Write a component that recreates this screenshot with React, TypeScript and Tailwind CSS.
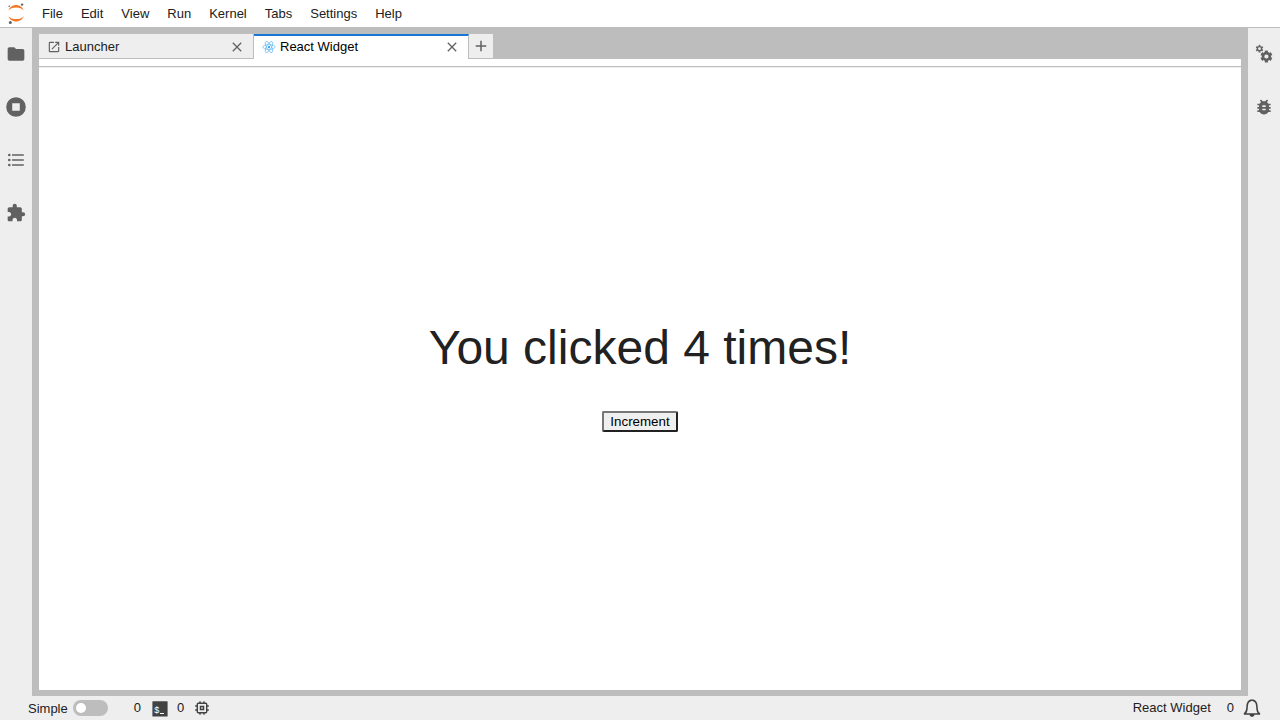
import { useState } from "react";
import type { ReactNode } from "react";
import { MdAdd, MdBugReport, MdExtension, MdFolder, MdLaunch } from "react-icons/md";

const menus = ["File", "Edit", "View", "Run", "Kernel", "Tabs", "Settings", "Help"];

function JupyterLogo() {
  return (
    <svg width="18" height="22" viewBox="0 0 18 22" aria-hidden="true">
      <g transform="translate(1.5 2.1) scale(0.1)" fill="#f37726">
        <path
          transform="translate(0 110.6)"
          d="M75.94 29.58C43.3 29.58 14.8 17.65 0 0c5.51 15.84 15.78 29.57 29.39 39.28C43 48.99 59.27 54.2 75.96 54.2c16.69 0 32.96-5.21 46.57-14.92C136.14 29.57 146.41 15.84 151.92 0c-14.83 17.65-43.34 29.58-75.98 29.58z"
        />
        <path d="M75.98 24.63c32.64 0 61.14 11.92 75.94 29.58-5.51-15.84-15.78-29.57-29.39-39.28C108.92 5.22 92.65 0 75.96 0S43 5.22 29.39 14.93C15.78 24.64 5.51 38.37 0 54.21c14.83-17.62 43.34-29.58 75.98-29.58z" />
      </g>
      <circle cx="15.1" cy="1.6" r="1.2" fill="#616161" />
      <circle cx="2.2" cy="3.3" r="0.8" fill="#616161" />
      <circle cx="3.3" cy="19.5" r="1.5" fill="#616161" />
    </svg>
  );
}

function ReactLogo() {
  return (
    <svg width="14" height="14" viewBox="0 0 14 14" fill="none" stroke="#61b8f5" strokeWidth="0.7" aria-hidden="true">
      <ellipse cx="7" cy="7" rx="6.2" ry="2.4" />
      <ellipse cx="7" cy="7" rx="6.2" ry="2.4" transform="rotate(60 7 7)" />
      <ellipse cx="7" cy="7" rx="6.2" ry="2.4" transform="rotate(120 7 7)" />
      <circle cx="7" cy="7" r="1.2" fill="#42a5f5" stroke="none" />
    </svg>
  );
}

function CloseIcon() {
  return (
    <svg width="16" height="16" viewBox="0 0 16 16" stroke="#616161" strokeWidth="1.3" aria-hidden="true">
      <path d="M3.8 3.8l8.4 8.4M12.2 3.8l-8.4 8.4" />
    </svg>
  );
}

function RunningIcon() {
  return (
    <svg width="20" height="20" viewBox="0 0 20 20" fill="#616161" aria-hidden="true">
      <path fillRule="evenodd" d="M10 .2a9.8 9.8 0 1 0 0 19.6A9.8 9.8 0 0 0 10 .2zM6.2 6.2h7.6v7.6H6.2z" />
    </svg>
  );
}

function ContentsIcon() {
  return (
    <svg width="20" height="20" viewBox="0 0 20 20" fill="#616161" aria-hidden="true">
      <path d="M6 4.3h11.8v1.4H6zM6 9.3h11.8v1.4H6zM6 14.3h11.8v1.4H6z" />
      <circle cx="3.3" cy="5" r="1.3" />
      <circle cx="3.3" cy="10" r="1.3" />
      <circle cx="3.3" cy="15" r="1.3" />
    </svg>
  );
}

function GearsIcon() {
  return (
    <svg width="20" height="20" viewBox="0 0 20 20" fill="none" stroke="#616161" aria-hidden="true">
      <circle cx="12.4" cy="12.5" r="3.4" strokeWidth="2.6" />
      <circle cx="12.4" cy="12.5" r="5" strokeWidth="2" pathLength="12" strokeDasharray="1.2 0.8" strokeDashoffset="1.6" />
      <circle cx="5.5" cy="4.7" r="2.1" strokeWidth="1.4" />
      <circle cx="5.5" cy="4.7" r="3.2" strokeWidth="1.3" pathLength="12" strokeDasharray="1.1 0.9" strokeDashoffset="1.55" />
    </svg>
  );
}

function TerminalIcon() {
  return (
    <svg width="16" height="18" viewBox="0 0 16 18" aria-hidden="true">
      <rect x="0.4" y="2.3" width="15.2" height="15.2" rx="0.5" fill="#424242" />
      <text x="2.2" y="13.5" fontSize="9" fontFamily="Liberation Sans, sans-serif" fill="#fff">$</text>
      <path d="M8 14h4v1H8z" fill="#fff" />
    </svg>
  );
}

function KernelIcon() {
  return (
    <svg width="16" height="16" viewBox="0 0 16 16" fill="none" stroke="#424242" aria-hidden="true">
      <rect x="3.3" y="3.3" width="9.4" height="9.4" rx="1" strokeWidth="1.4" />
      <rect x="6.5" y="6.5" width="3" height="3" strokeWidth="1.5" />
      <path
        strokeWidth="1.3"
        d="M6 1.2v2M10 1.2v2M6 12.8v2M10 12.8v2M1.2 6h2M1.2 10h2M12.8 6h2M12.8 10h2"
      />
    </svg>
  );
}

function BellIcon() {
  return (
    <svg width="18" height="18" viewBox="0 0 16 16" fill="#424242" aria-hidden="true">
      <path d="M8 .29c-1.4 0-2.7.73-3.6 1.8-1.2 1.5-1.4 3.4-1.5 5.2-.18 2.2-.44 4-2.3 5.3l.28 1.3h5c.026.66.32 1.1.71 1.5.84.61 2 .61 2.8 0 .52-.4.6-1 .71-1.5h5l.28-1.3c-1.9-.97-2.2-3.3-2.3-5.3-.13-1.8-.26-3.7-1.5-5.2-.85-1-2.2-1.8-3.6-1.8zm0 1.4c.88 0 1.9.55 2.5 1.3.88 1.1 1.1 2.7 1.2 4.4.13 1.7.23 3.6 1.3 5.2H3c1.1-1.6 1.2-3.4 1.3-5.2.13-1.7.3-3.3 1.2-4.4.59-.72 1.6-1.3 2.5-1.3z" />
    </svg>
  );
}

function SideButton({ label, children }: { label: string; children: ReactNode }) {
  return (
    <button aria-label={label} className="flex h-[53px] w-8 items-center justify-center pb-px">
      {children}
    </button>
  );
}

function DocTab({ label, icon, active }: { label: string; icon: ReactNode; active: boolean }) {
  const look = active
    ? "border-t-2 border-t-[#1976d2] bg-white pb-px text-black"
    : "border-b border-b-[#bdbdbd] bg-[#eeeeee] pt-px";
  return (
    <div className={`flex w-[215px] items-center border-r border-r-[#bdbdbd] px-2 ${look}`}>
      <button role="tab" aria-selected={active} className="flex flex-1 items-center gap-1 text-left">
        {icon}
        <span>{label}</span>
      </button>
      <button aria-label={`Close ${label}`}>
        <CloseIcon />
      </button>
    </div>
  );
}

export default function App() {
  const [count, setCount] = useState(4);
  const [simple, setSimple] = useState(false);

  return (
    <div className="flex h-screen flex-col bg-[#eeeeee] font-['Liberation_Sans',Arial,sans-serif] text-[13px] leading-4 text-[#212121]">
      <header className="flex h-7 shrink-0 items-center border-b border-[#bdbdbd] bg-white pl-[7px]">
        <JupyterLogo />
        <nav className="ml-2 flex">
          {menus.map((menu) => (
            <button key={menu} className="px-[9px] py-1">{menu}</button>
          ))}
        </nav>
      </header>

      <div className="flex min-h-0 flex-1 text-[#616161]">
        <aside className="w-8 shrink-0">
          <SideButton label="File Browser"><MdFolder size={20} /></SideButton>
          <SideButton label="Running Terminals and Kernels"><RunningIcon /></SideButton>
          <SideButton label="Table of Contents"><ContentsIcon /></SideButton>
          <SideButton label="Extension Manager"><MdExtension size={20} /></SideButton>
        </aside>

        <main className="flex min-w-0 flex-1 flex-col bg-[#bdbdbd] px-[7px] py-1.5 text-[#212121]">
          <div role="tablist" className="flex h-[25px] shrink-0">
            <DocTab label="Launcher" icon={<MdLaunch size={14} className="text-[#616161]" />} active={false} />
            <DocTab label="React Widget" icon={<ReactLogo />} active />
            <button aria-label="New Launcher" className="mb-px flex w-6 items-center justify-center bg-[#eeeeee] text-[#616161]">
              <MdAdd size={18} />
            </button>
          </div>
          <div className="h-2 shrink-0 border-b border-[#bdbdbd] bg-white" />
          <section className="flex flex-1 flex-col items-center justify-center bg-white pb-px shadow-[inset_0_1px_1px_#eeeeee]">
            <h1 className="text-5xl">You clicked {count} times!</h1>
            <button
              onClick={() => setCount(count + 1)}
              className="mt-[39px] rounded-xs border-2 border-t-[#767676] border-r-[#212121] border-b-[#212121] border-l-[#767676] bg-[#efefef] px-1.5 py-px text-[13.3333px] leading-[15px] text-black"
            >
              Increment
            </button>
          </section>
        </main>

        <aside className="w-8 shrink-0">
          <SideButton label="Property Inspector"><GearsIcon /></SideButton>
          <SideButton label="Debugger"><MdBugReport size={20} /></SideButton>
        </aside>
      </div>

      <footer className="flex h-6 shrink-0 items-center justify-between pr-[19px] pl-7">
        <div className="flex items-center">
          <label className="flex items-center gap-[5px]">
            <span className="pt-0.5">Simple</span>
            <input
              type="checkbox"
              role="switch"
              checked={simple}
              onChange={() => setSimple(!simple)}
              className="h-4 w-[35px] appearance-none rounded-full bg-[#bdbdbd] p-[3px] before:block before:size-2.5 before:rounded-full before:bg-white checked:bg-[#1976d2] checked:before:ml-auto"
            />
          </label>
          <button className="ml-[26px] flex items-center gap-[11px]">0<TerminalIcon /></button>
          <button className="ml-[9px] flex items-center gap-[10px]">0<KernelIcon /></button>
        </div>
        <div className="flex items-center gap-4">
          <span>React Widget</span>
          <button aria-label="0 notifications" className="flex items-center gap-[9px]">0<BellIcon /></button>
        </div>
      </footer>
    </div>
  );
}
